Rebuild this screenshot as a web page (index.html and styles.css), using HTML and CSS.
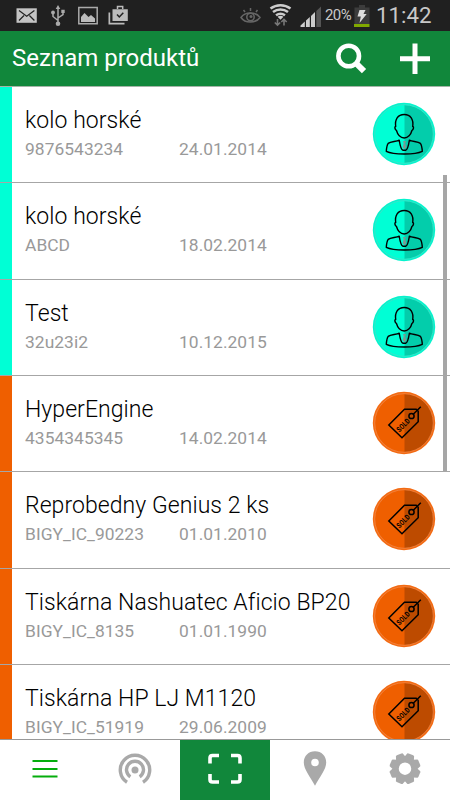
FILE: index.html
```
<!DOCTYPE html>
<html lang="cs">
  <head>
    <meta charset="utf-8">
    <title>Seznam produktů</title>
    <link rel="stylesheet" href="styles.css">
  </head>
  <body>
    <svg class="defs">
      <symbol id="person" viewBox="0 0 64 64">
        <circle cx="32" cy="32" r="31.2" fill="#05f3cd"/>
        <circle cx="32" cy="32" r="29" fill="#00ffd5"/>
        <path d="M32.5 3a29 29 0 0 1 0 58z" fill="#03cdab"/>
        <circle cx="32" cy="32" r="29.3" fill="none" stroke="#3fe5c9" stroke-width=".8"/>
        <g fill="none" stroke="#000" stroke-width="1.4" stroke-linejoin="round">
          <path d="M23.700 24.500c-1-7 2-12 8.500-12s9.500 5 8.500 12c1.300.2 1 3-.8 4-1 4-4 7.500-7.700 7.500s-6.700-3.500-7.700-7.500c-1.800-1-2.100-3.800-.8-4z"/>
          <path d="M27.200 38.200c-3 1.600-8.500 1.200-11 3.200-1.500 2-1.700 5-1.900 8 7 3.500 29 3.500 36 0-.2-3-.4-6-1.900-8-2.500-2-8-1.600-11-3.200-.8 5-2 9.500-3.600 10h-3c-1.500-.5-2.800-5-3.600-10z"/>
        </g>
        <path d="M31 39h3l-.8 2.200 1 4-1.700 2-1.800-2 1-4z" fill="#7c9992"/>
      </symbol>
      <symbol id="sold" viewBox="0 0 64 64">
        <circle cx="32" cy="32" r="31.200" fill="#f36a12"/>
        <circle cx="32" cy="32" r="29" fill="#ef5f00"/>
        <path d="M32.500 3a29 29 0 0 1 0 58z" fill="#bd4b00"/>
        <circle cx="32" cy="32" r="29.300" fill="none" stroke="#f08a4c" stroke-width=".7"/>
        <path d="M16.800 34 32.500 18.300h11.700l2 2v10.500L30 46.800z" fill="none" stroke="#000" stroke-width="1.500"/>
        <circle cx="39.500" cy="25" r="2.600" fill="none" stroke="#000" stroke-width="1.500"/>
        <path d="m41 23.500 7.800-7.700" stroke="#000" stroke-width="1.500"/>
        <text class="sold-text" x="0" y="0" text-anchor="middle" transform="translate(33 35.900) rotate(-45) scale(.78 1)">SOLD</text>
      </symbol>
    </svg>

    <div class="statusbar">
      <svg width="225" height="31" viewBox="0 0 225 31">
        <path d="M16.500 8.300h20.300v14.500H16.500z" fill="#c4c4c4"/>
        <path d="m19 10.500 7.700 5.700 7.700-5.700M19 20.500l5-5M34.400 20.500l-5-5" fill="none" stroke="#222" stroke-width="1.200"/>
        <g stroke="#aaa" stroke-width="1.500" fill="none">
          <path d="M58 8v15M58 20.500l-5-4v-4M58 18l5-3.500v-3"/>
        </g>
        <path d="m58 5 2.300 4h-4.600zM61.300 9.700h3.400V13h-3.400z" fill="#aaa"/>
        <circle cx="53" cy="12.500" r="1.900" fill="#aaa"/>
        <circle cx="58" cy="23.700" r="2.300" fill="#aaa"/>
        <path d="M78.800 7.500h18.400v16.300H78.800z" fill="none" stroke="#aaa" stroke-width="1.500"/>
        <path d="M81 22v-5l3.500-4 4 4 2.500-2 4 3.500V22z" fill="#bbb"/>
        <path d="M112.500 9.200h15.300V21h-15.300zM108.500 12.500h1.700v10.200h14.300v1.700h-16z" fill="#bbb"/>
        <path d="M117.500 9V6.500h5.200V9" fill="none" stroke="#bbb" stroke-width="1.500"/>
        <path d="m117 14.500 2.300 2.500 4-4.300" fill="none" stroke="#222" stroke-width="1.500"/>
      </svg>
      <svg width="100" height="31" viewBox="0 0 100 31">
        <g fill="none" stroke="#666" stroke-width="1.500">
          <path d="M16 17.500c4-6 15-6 19 0-4 6-15 6-19 0zM20 12l-1.500-2M25.500 11V8M31 12l1.500-2"/>
          <circle cx="25.500" cy="17" r="3.700"/>
        </g>
        <circle cx="26" cy="16.500" r="1.500" fill="#666"/>
        <g fill="none" stroke="#ccc" stroke-width="2.500">
          <path d="M45.500 8.500c6-4.500 14-4.500 20 0M48 12c4.500-3.500 10.500-3.500 15 0M51 15.200c3-2 6-2 9 0"/>
        </g>
        <path d="m52.500 16.800 3 3 3-3c-2-1.300-4-1.300-6 0z" fill="#ccc"/>
        <path d="M52.500 19v6M49.800 22.500l2.700 2.700 2.700-2.700M59 25.500v-6M56.300 22l2.700-2.700 2.700 2.700" fill="none" stroke="#777" stroke-width="1.600"/>
        <path d="M75.500 27v-1.500l4.300-4V27zM81 27v-6.500l3.800-3.500v10zM86 27V16l4-4v15z" fill="#ccc"/>
        <path d="M91.300 27V11L96 6.500V27z" fill="#555"/>
      </svg>
      <span class="battery-level">20%</span>
      <svg class="battery" width="16" height="31" viewBox="0 0 16 31">
        <path d="M5 5h6v2.500h4.500V24H.500V7.500H5z" fill="#3c3c3c"/>
        <path d="M0 24h15.500v3H0z" fill="#80a800"/>
        <path d="M5.500 10h6l-2 4h3.200L5.500 23l1.300-6.500H3.500z" fill="#ddd"/>
      </svg>
      <span class="clock">11:42</span>
    </div>

    <div class="toolbar">
      <h1>Seznam produktů</h1>
      <svg width="120" height="55" viewBox="0 0 120 55">
        <circle cx="18.700" cy="25" r="10.300" fill="none" stroke="#fff" stroke-width="4.600"/>
        <path d="m25.800 32 8.200 8.200" stroke="#fff" stroke-width="6"/>
        <path d="M70 27.800h30M85 12.500v30.500" stroke="#fff" stroke-width="5"/>
      </svg>
    </div>

    <div class="list">
      <div class="item owned">
        <div class="text">
          <div class="name">kolo horské</div>
          <div class="meta"><span class="code">9876543234</span><span>24.01.2014</span></div>
        </div>
        <svg class="state"><use href="#person"/></svg>
      </div>
      <div class="item owned">
        <div class="text">
          <div class="name">kolo horské</div>
          <div class="meta"><span class="code">ABCD</span><span>18.02.2014</span></div>
        </div>
        <svg class="state"><use href="#person"/></svg>
      </div>
      <div class="item owned">
        <div class="text">
          <div class="name">Test</div>
          <div class="meta"><span class="code">32u23i2</span><span>10.12.2015</span></div>
        </div>
        <svg class="state"><use href="#person"/></svg>
      </div>
      <div class="item sold">
        <div class="text">
          <div class="name">HyperEngine</div>
          <div class="meta"><span class="code">4354345345</span><span>14.02.2014</span></div>
        </div>
        <svg class="state"><use href="#sold"/></svg>
      </div>
      <div class="item sold">
        <div class="text">
          <div class="name">Reprobedny Genius 2 ks</div>
          <div class="meta"><span class="code">BIGY_IC_90223</span><span>01.01.2010</span></div>
        </div>
        <svg class="state"><use href="#sold"/></svg>
      </div>
      <div class="item sold">
        <div class="text">
          <div class="name">Tiskárna Nashuatec Aficio BP20</div>
          <div class="meta"><span class="code">BIGY_IC_8135</span><span>01.01.1990</span></div>
        </div>
        <svg class="state"><use href="#sold"/></svg>
      </div>
      <div class="item sold">
        <div class="text">
          <div class="name">Tiskárna HP LJ M1120</div>
          <div class="meta"><span class="code">BIGY_IC_51919</span><span>29.06.2009</span></div>
        </div>
        <svg class="state"><use href="#sold"/></svg>
      </div>
      <div class="scrollbar"></div>
    </div>

    <div class="tabs">
      <div class="tab">
        <svg viewBox="0 0 90 60">
          <path d="M32.500 21h25M32.500 29h25M32.500 36.500h25" stroke="#05ad0d" stroke-width="2"/>
        </svg>
      </div>
      <div class="tab">
        <svg viewBox="0 0 90 60">
          <g fill="none" stroke="#a9a9a9" stroke-width="3.400">
            <path d="M37 42.300A14.700 14.700 0 1 1 53 42.300"/>
            <path d="M40.300 36.800A8.500 8.500 0 1 1 49.700 36.800"/>
          </g>
          <circle cx="45" cy="30" r="3.500" fill="#a9a9a9"/>
        </svg>
      </div>
      <div class="tab active">
        <svg viewBox="0 0 90 60">
          <path d="M30 23.500V18q0-2.500 2.500-2.500H39M51 15.500h6.500Q60 15.500 60 18v5.500M60 34v5.500q0 2.500-2.500 2.500H51M39 42h-6.500Q30 42 30 39.500V34" fill="none" stroke="#fff" stroke-width="3.600"/>
        </svg>
      </div>
      <div class="tab">
        <svg viewBox="0 0 90 60">
          <path fill-rule="evenodd" d="M45 11.300c-6.500 0-11.200 4.700-11.200 11.200 0 7 6 13.500 11.200 23.200 5.200-9.700 11.200-16.200 11.200-23.200 0-6.500-4.700-11.200-11.200-11.200zm0 7.400a3.800 3.800 0 1 1 0 7.600 3.800 3.800 0 0 1 0-7.600z" fill="#a9a9a9"/>
        </svg>
      </div>
      <div class="tab">
        <svg viewBox="0 0 90 60">
          <circle cx="45" cy="28.700" r="9" fill="none" stroke="#a9a9a9" stroke-width="5.500"/>
          <g fill="#a9a9a9" transform="translate(45 28.700)">
            <path id="tooth" d="M-5.200-10.600-3.600-15.100-2.500-15.500 2.500-15.500 3.600-15.100 5.200-10.600 3-8h-6z" transform="rotate(22.500)"/>
            <use href="#tooth" transform="rotate(45)"/>
            <use href="#tooth" transform="rotate(90)"/>
            <use href="#tooth" transform="rotate(135)"/>
            <use href="#tooth" transform="rotate(180)"/>
            <use href="#tooth" transform="rotate(225)"/>
            <use href="#tooth" transform="rotate(270)"/>
            <use href="#tooth" transform="rotate(315)"/>
          </g>
        </svg>
      </div>
    </div>
  </body>
</html>
```

FILE: styles.css
```
html, body {
    margin: 0;
    padding: 0;
}
body {
    display: flex;
    flex-direction: column;
    width: 450px;
    height: 800px;
    overflow: hidden;
    background: #fff;
    font-family: Roboto, "Liberation Sans", sans-serif;
}
svg {
    display: block;
    flex: none;
}
.defs {
    display: none;
}
.sold-text {
    font: bold 7.5px Roboto, sans-serif;
    letter-spacing: 0.3px;
}
.statusbar {
    display: flex;
    height: 31px;
    flex: none;
    line-height: 31px;
    background: #202020;
    color: #c8c8c8;
}
.battery-level {
    width: 29px;
    font-size: 15px;
    letter-spacing: -0.6px;
}
.battery {
    margin-right: 6px;
}
.clock {
    font-size: 22.3px;
}
.toolbar {
    display: flex;
    justify-content: space-between;
    height: 55px;
    flex: none;
    padding: 0 0 0 12px;
    background: #11873b;
    border-bottom: 1px solid #a5b5a8;
}
h1 {
    margin: 0;
    font-size: 24px;
    font-weight: 400;
    line-height: 54px;
    color: #fff;
}
.list {
    position: relative;
    flex: 1;
    min-height: 0;
    overflow: hidden;
}
.item {
    display: flex;
    box-sizing: border-box;
    height: 96.33px;
    border-bottom: 1px solid #a6a6a6;
}
.item:before {
    content: "";
    width: 12px;
    flex: none;
}
.owned:before {
    background: #00ffd5;
}
.sold:before {
    background: #ef5f00;
}
.text {
    flex: 1;
    padding: 20px 0 0 13px;
}
.name {
    font-size: 23px;
    font-weight: 300;
    line-height: 28px;
    letter-spacing: 0.06px;
    color: #000;
    white-space: nowrap;
}
.meta {
    display: flex;
    font-size: 17.4px;
    line-height: 28px;
    letter-spacing: 0.04px;
    color: #999;
}
.code {
    width: 154px;
}
.state {
    width: 64px;
    height: 64px;
    margin: 15px 14.5px 0 0;
}
.scrollbar {
    position: absolute;
    top: 88px;
    right: 3.5px;
    width: 4px;
    height: 297px;
    background: #a6a6a6;
}
.tabs {
    display: flex;
    height: 60px;
    flex: none;
    border-top: 1px solid #999;
}
.tab {
    width: 90px;
}
.tab svg {
    width: 90px;
    height: 60px;
}
.active {
    background: #11873b;
}
```
